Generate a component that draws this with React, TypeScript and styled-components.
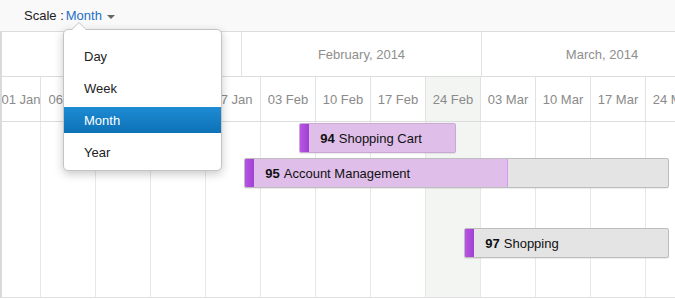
import React from 'react'
import styled, { createGlobalStyle } from 'styled-components'

const GlobalStyle = createGlobalStyle`
  html, body {
    margin: 0;
    padding: 0;
    background: #fff;
    font-family: "Liberation Sans", Arial, sans-serif;
    overflow: hidden;
  }
`

const DAY = 55 / 7
const ORIGIN = 40 // x of 06 Jan

const months = [
  { label: 'January, 2014', width: 239 },
  { label: 'February, 2014', width: 239 },
  { label: 'March, 2014', width: 240 },
]

const weeks = [
  { label: '01 Jan', width: 38 },
  { label: '06 Jan' }, { label: '13 Jan' }, { label: '20 Jan' }, { label: '27 Jan' },
  { label: '03 Feb' }, { label: '10 Feb' }, { label: '17 Feb' },
  { label: '24 Feb', today: true },
  { label: '03 Mar' }, { label: '10 Mar' }, { label: '17 Mar' }, { label: '24 Mar' },
]

// start / end in days from 06 Jan 2014
const tasks = [
  { id: 94, name: 'Shopping Cart', start: 33, end: 53, progress: 1 },
  { id: 95, name: 'Account Management', start: 26, end: 80, progress: 0.62 },
  null,
  { id: 97, name: 'Shopping', start: 54, end: 80, progress: 0 },
  null,
]

const Page = styled.div`
  width: 675px;
  height: 299px;
  position: relative;
  overflow: hidden;
`

const Toolbar = styled.div`
  height: 31px;
  display: flex;
  align-items: center;
  padding-left: 24px;
  background: #f9f9f9;
  font-size: 13px;
  color: #222;
  box-sizing: border-box;
`

const ScaleLink = styled.span`
  color: #1c6fc6;
  margin-left: 2px;
  display: inline-flex;
  align-items: center;
`

const Caret = styled.span`
  display: inline-block;
  margin-left: 5px;
  margin-top: 2px;
  border-left: 4px solid transparent;
  border-right: 4px solid transparent;
  border-top: 4px solid #666;
`

const Grid = styled.div`
  border-top: 1px solid #dcdcdc;
  border-left: 2px solid #dadada;
  width: 760px;
`

const HeaderRow = styled.div<{ $height: number }>`
  display: flex;
  height: ${(p) => p.$height}px;
  border-bottom: 1px solid #dcdcdc;
  box-sizing: border-box;
`

const MonthCell = styled.div`
  flex: none;
  display: flex;
  align-items: center;
  justify-content: center;
  font-size: 13px;
  color: #8e8e8e;
  border-right: 1px solid #e2e2e2;
`

const WeekCell = styled.div<{ $today?: boolean }>`
  flex: none;
  display: flex;
  align-items: center;
  justify-content: center;
  font-size: 13px;
  color: #8a8a8a;
  white-space: nowrap;
  overflow: hidden;
  background: ${(p) => (p.$today ? '#f3f5f2' : 'transparent')};
  border-right: 1px solid #e2e2e2;
`

const Body = styled.div`
  position: relative;
  height: 175px;
  border-bottom: 1px solid #e0e0e0;
`

const Columns = styled.div`
  position: absolute;
  inset: 0;
  display: flex;
`

const Column = styled.div<{ $today?: boolean }>`
  flex: none;
  background: ${(p) => (p.$today ? '#f3f5f2' : 'transparent')};
  border-right: 1px solid #e8e8e8;
`

const Rows = styled.div`
  position: relative;
  display: flex;
  flex-direction: column;
`

const Row = styled.div`
  height: 35px;
  box-sizing: border-box;
  padding-top: 1px;
  display: flex;
  align-items: flex-start;
`

const Bar = styled.div<{ $done: boolean }>`
  position: relative;
  height: 30px;
  box-sizing: border-box;
  border: 1px solid ${(p) => (p.$done ? '#c7a9d3' : '#bdbdbd')};
  border-radius: 2px;
  background: #e4e4e4;
  display: flex;
  align-items: center;
  overflow: hidden;
  box-shadow: 0 1px 1px rgba(0, 0, 0, 0.08);
`

const Progress = styled.div`
  position: absolute;
  left: 0;
  top: 0;
  bottom: 0;
  background: #dfbeea;
  border-right: 1px solid #d49af0;
`

const Handle = styled.div`
  position: relative;
  flex: none;
  width: 9px;
  align-self: stretch;
  background: linear-gradient(to right, #b954e6, #a040d0);
`

const Label = styled.span`
  position: relative;
  margin-left: 11px;
  font-size: 13px;
  color: #111;
  white-space: nowrap;
  b {
    font-weight: bold;
    margin-right: 4px;
  }
`

const Menu = styled.div`
  position: absolute;
  left: 63px;
  top: 29px;
  width: 159px;
  height: 142px;
  box-sizing: border-box;
  background: #fff;
  border: 1px solid #c4c4c4;
  border-radius: 5px;
  box-shadow: 0 3px 10px rgba(0, 0, 0, 0.22);
  padding: 13px 0 0;
  display: flex;
  flex-direction: column;
  gap: 6px;

  &::before,
  &::after {
    content: '';
    position: absolute;
    left: 7px;
    border-left: 8px solid transparent;
    border-right: 8px solid transparent;
  }
  &::before {
    top: -8px;
    border-bottom: 8px solid #c4c4c4;
  }
  &::after {
    top: -7px;
    border-bottom: 8px solid #fff;
  }
`

const MenuItem = styled.div<{ $active?: boolean }>`
  height: 26px;
  display: flex;
  align-items: center;
  padding-left: 20px;
  font-size: 13px;
  color: ${(p) => (p.$active ? '#fff' : '#222')};
  background: ${(p) => (p.$active ? 'linear-gradient(#1d8bd3, #0e72b6)' : 'transparent')};
`

const weekWidth = (w: { width?: number }) => w.width ?? 54

export default function App() {
  return (
    <Page>
      <GlobalStyle />
      <Toolbar>
        Scale :
        <ScaleLink>
          Month
          <Caret />
        </ScaleLink>
      </Toolbar>
      <Grid>
        <HeaderRow $height={45}>
          {months.map((m) => (
            <MonthCell key={m.label} style={{ width: m.width }}>
              {m.label}
            </MonthCell>
          ))}
        </HeaderRow>
        <HeaderRow $height={45}>
          {weeks.map((w) => (
            <WeekCell key={w.label} $today={w.today} style={{ width: weekWidth(w) }}>
              {w.label}
            </WeekCell>
          ))}
        </HeaderRow>
        <Body>
          <Columns>
            {weeks.map((w) => (
              <Column key={w.label} $today={w.today} style={{ width: weekWidth(w) }} />
            ))}
          </Columns>
          <Rows>
            {tasks.map((t, i) =>
              t ? (
                <Row key={t.id}>
                  <Bar
                    $done={t.progress >= 1}
                    style={{
                      marginLeft: ORIGIN - 2 + t.start * DAY,
                      width: (t.end - t.start) * DAY,
                    }}
                  >
                    <Progress style={{ width: `${t.progress * 100}%` }} />
                    <Handle />
                    <Label>
                      <b>{t.id}</b>
                      {t.name}
                    </Label>
                  </Bar>
                </Row>
              ) : (
                <Row key={'empty' + i} />
              )
            )}
          </Rows>
        </Body>
      </Grid>
      <Menu>
        <MenuItem>Day</MenuItem>
        <MenuItem>Week</MenuItem>
        <MenuItem $active>Month</MenuItem>
        <MenuItem>Year</MenuItem>
      </Menu>
    </Page>
  )
}
